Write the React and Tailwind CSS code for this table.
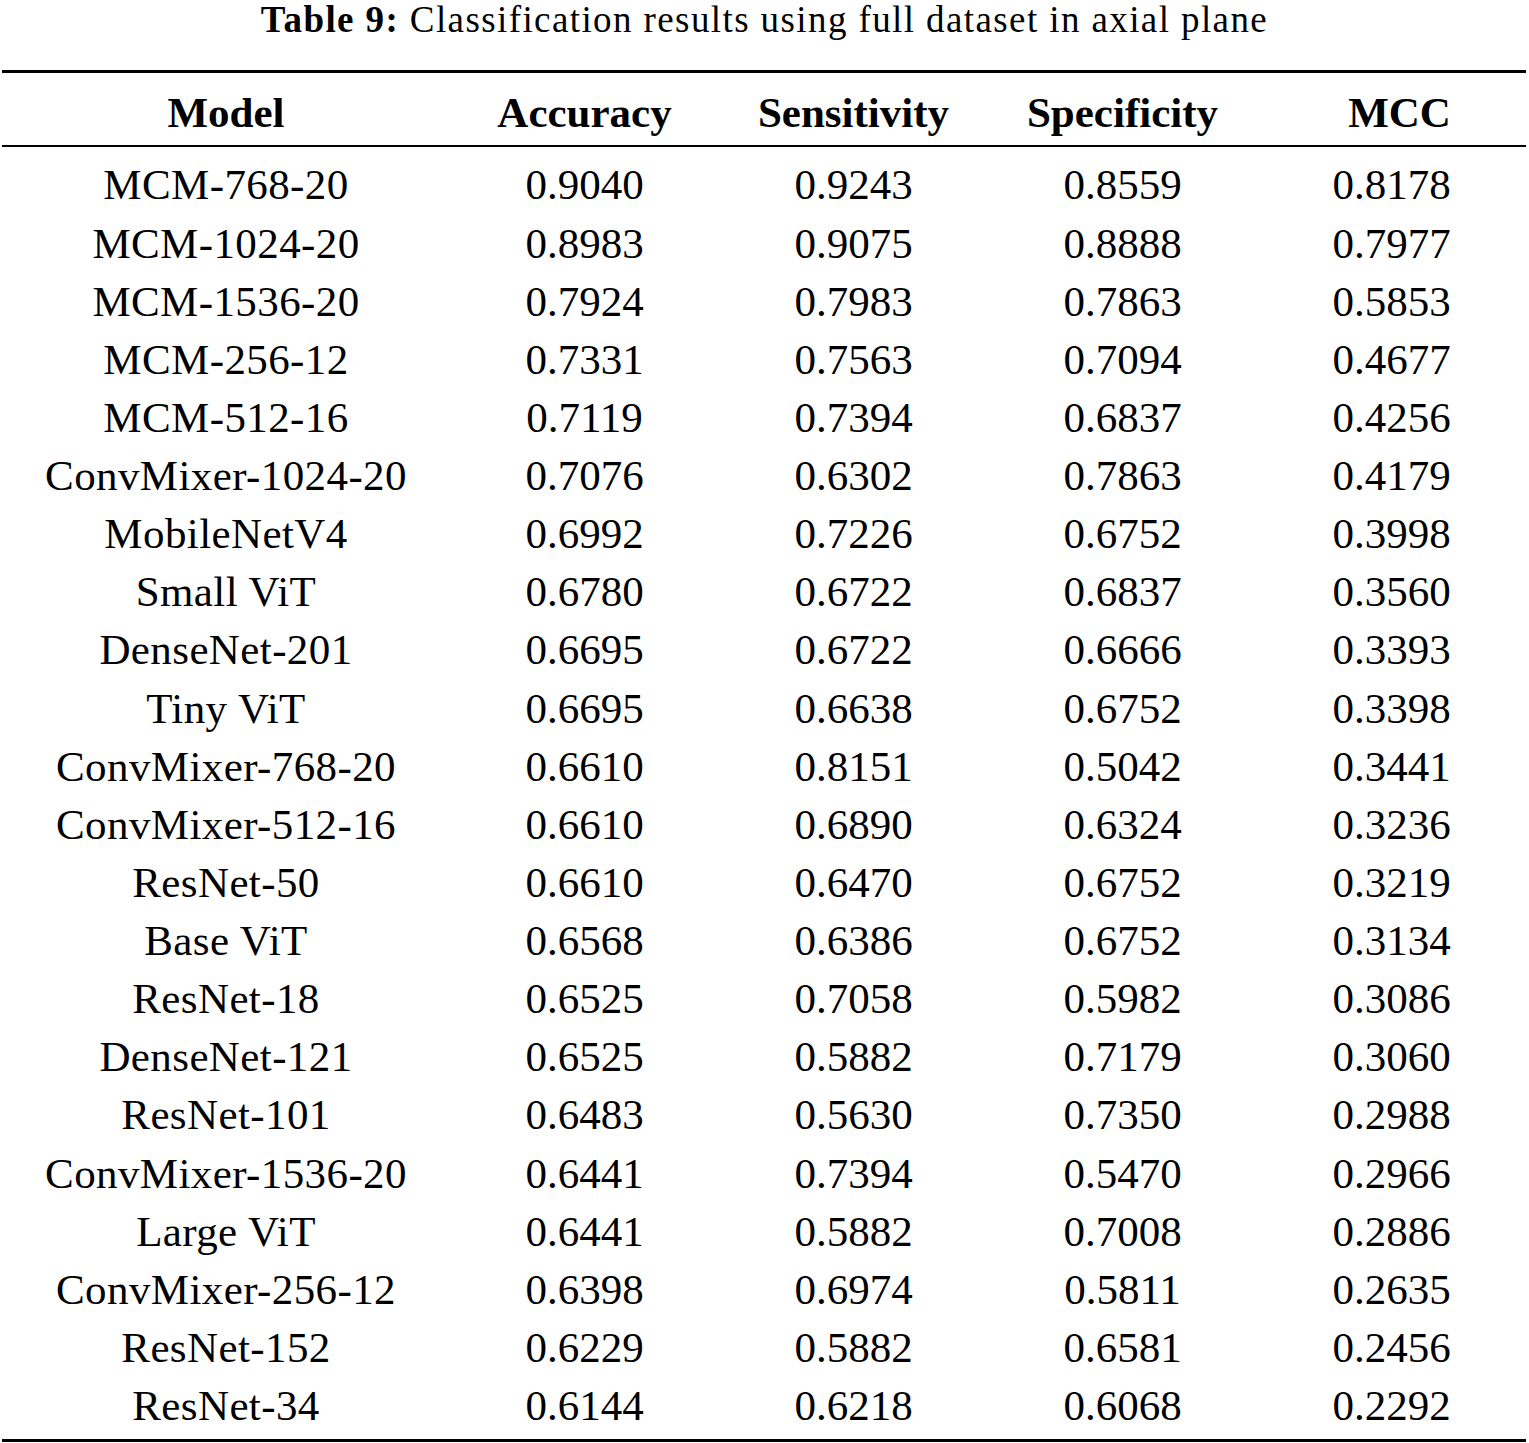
import React from "react";

const rows = [
  ["MCM-768-20", "0.9040", "0.9243", "0.8559", "0.8178"],
  ["MCM-1024-20", "0.8983", "0.9075", "0.8888", "0.7977"],
  ["MCM-1536-20", "0.7924", "0.7983", "0.7863", "0.5853"],
  ["MCM-256-12", "0.7331", "0.7563", "0.7094", "0.4677"],
  ["MCM-512-16", "0.7119", "0.7394", "0.6837", "0.4256"],
  ["ConvMixer-1024-20", "0.7076", "0.6302", "0.7863", "0.4179"],
  ["MobileNetV4", "0.6992", "0.7226", "0.6752", "0.3998"],
  ["Small ViT", "0.6780", "0.6722", "0.6837", "0.3560"],
  ["DenseNet-201", "0.6695", "0.6722", "0.6666", "0.3393"],
  ["Tiny ViT", "0.6695", "0.6638", "0.6752", "0.3398"],
  ["ConvMixer-768-20", "0.6610", "0.8151", "0.5042", "0.3441"],
  ["ConvMixer-512-16", "0.6610", "0.6890", "0.6324", "0.3236"],
  ["ResNet-50", "0.6610", "0.6470", "0.6752", "0.3219"],
  ["Base ViT", "0.6568", "0.6386", "0.6752", "0.3134"],
  ["ResNet-18", "0.6525", "0.7058", "0.5982", "0.3086"],
  ["DenseNet-121", "0.6525", "0.5882", "0.7179", "0.3060"],
  ["ResNet-101", "0.6483", "0.5630", "0.7350", "0.2988"],
  ["ConvMixer-1536-20", "0.6441", "0.7394", "0.5470", "0.2966"],
  ["Large ViT", "0.6441", "0.5882", "0.7008", "0.2886"],
  ["ConvMixer-256-12", "0.6398", "0.6974", "0.5811", "0.2635"],
  ["ResNet-152", "0.6229", "0.5882", "0.6581", "0.2456"],
  ["ResNet-34", "0.6144", "0.6218", "0.6068", "0.2292"],
];

const headers = ["Model", "Accuracy", "Sensitivity", "Specificity", "MCC"];

export default function App() {
  return (
    <div className="w-[1529px] bg-white text-black font-['Liberation_Serif',serif]">
      <div className="h-[70px] text-center text-[37px] leading-[40px] tracking-[1.4px]">
        <span className="font-bold">Table 9:</span> Classification results using full dataset in axial plane
      </div>
      <div className="ml-[2px] w-[1524px]">
        <div className="h-[3px] bg-black" />
        <div className="grid grid-cols-[448px_269px_269px_269px_269px] h-[72px] pt-[8px] text-[43px] leading-[64px] font-bold text-center">
          {headers.map((h, i) => (
            <div key={h} className={i === 4 ? "pl-[16px]" : ""}>{h}</div>
          ))}
        </div>
        <div className="h-[2px] bg-black" />
        <div className="pt-[9.4px] pb-[3.5px]">
          {rows.map((r) => (
            <div
              key={r[0]}
              className="grid grid-cols-[448px_269px_269px_269px_269px] h-[58.14px] text-[43px] leading-[58.14px] text-center whitespace-nowrap"
            >
              {r.map((c, i) => (
                <div key={i} className={i === 0 ? "tracking-[0.4px]" : ""}>{c}</div>
              ))}
            </div>
          ))}
        </div>
        <div className="h-[3px] bg-black" />
      </div>
    </div>
  );
}
